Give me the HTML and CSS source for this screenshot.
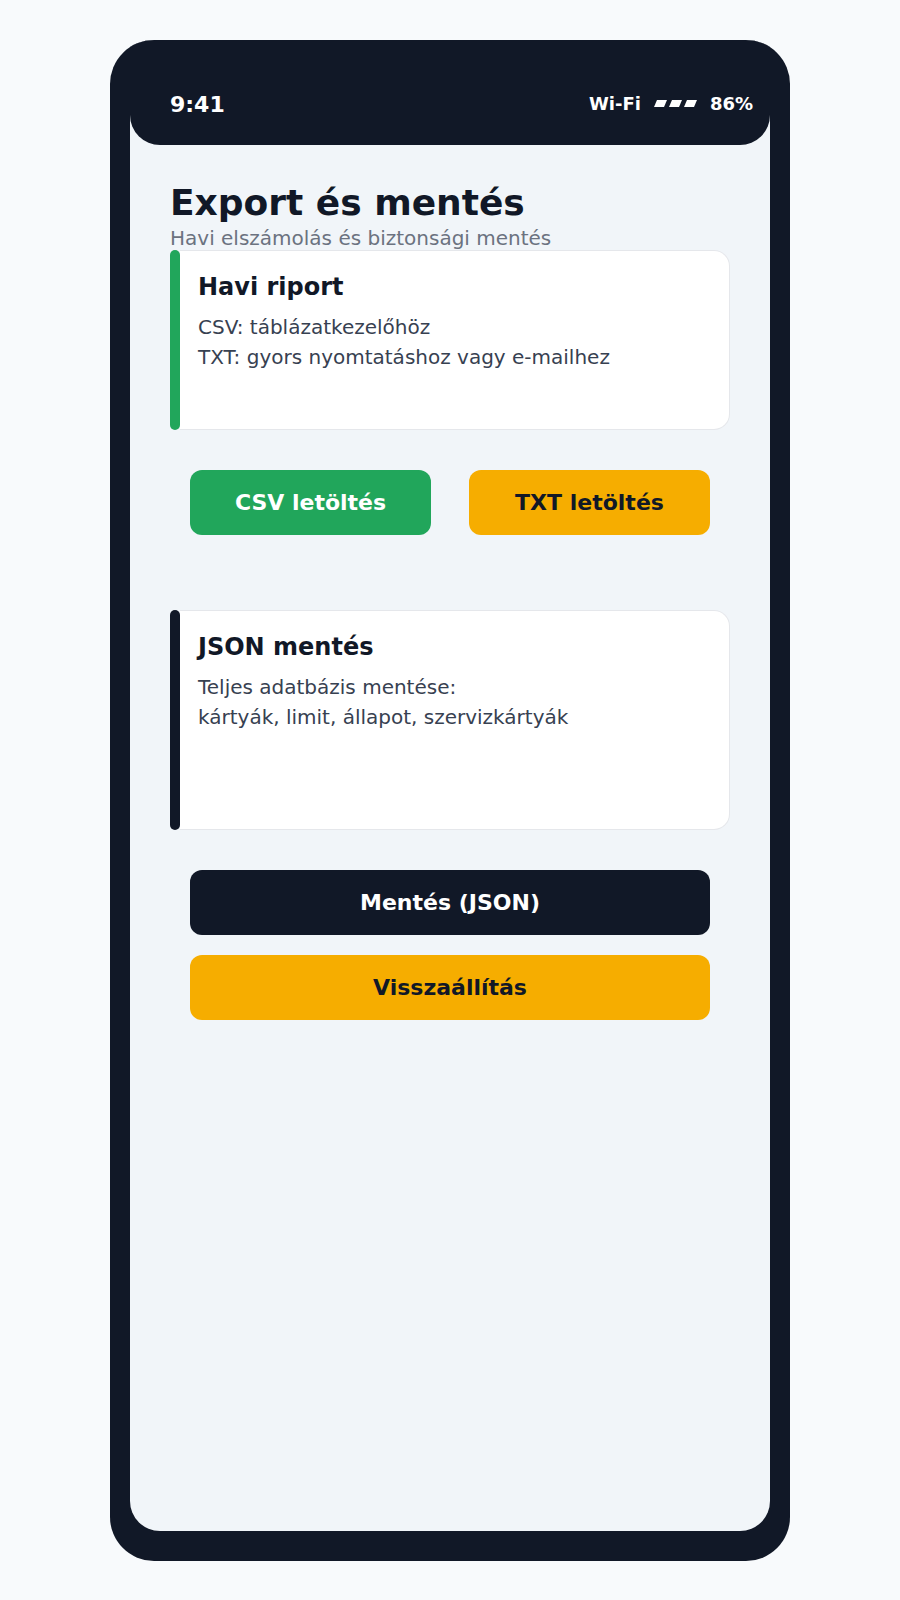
FILE: index.html
```html
<!DOCTYPE html>
<html lang="hu">
<head>
<meta charset="utf-8">
<title>Export és mentés</title>
<link rel="stylesheet" href="styles.css">
</head>
<body>
<div class="phone">
  <div class="screen">
    <header class="status">
      <span class="time">9:41</span>
      <span class="indicators">
        <span>Wi-Fi</span>
        <svg class="signal" width="43" height="8" viewBox="0 0 43 8" aria-hidden="true">
          <polygon points="3,0 13,0 10,7 0,7"/>
          <polygon points="18,0 28,0 25,7 15,7"/>
          <polygon points="33,0 43,0 40,7 30,7"/>
        </svg>
        <span>86%</span>
      </span>
    </header>

    <main class="content">
      <h1 class="title">Export és mentés</h1>
      <p class="subtitle">Havi elszámolás és biztonsági mentés</p>

      <section class="card">
        <div class="accent accent-green"></div>
        <div class="card-body">
          <h2 class="card-title">Havi riport</h2>
          <p class="card-text">CSV: táblázatkezelőhöz</p>
          <p class="card-text">TXT: gyors nyomtatáshoz vagy e-mailhez</p>
        </div>
      </section>

      <div class="btn-row">
        <button class="btn btn-green">CSV letöltés</button>
        <button class="btn btn-amber">TXT letöltés</button>
      </div>

      <section class="card card-tall">
        <div class="accent accent-dark"></div>
        <div class="card-body">
          <h2 class="card-title">JSON mentés</h2>
          <p class="card-text">Teljes adatbázis mentése:</p>
          <p class="card-text">kártyák, limit, állapot, szervizkártyák</p>
        </div>
      </section>

      <div class="btn-stack">
        <button class="btn btn-dark">Mentés (JSON)</button>
        <button class="btn btn-amber">Visszaállítás</button>
      </div>
    </main>
  </div>
</div>
</body>
</html>
```

FILE: styles.css
```css
* {
  box-sizing: border-box;
  margin: 0;
  padding: 0;
}

body {
  background: #f8fafc;
  font-family: "DejaVu Sans", "Noto Sans", sans-serif;
  color: #111827;
}

/* device frame */
.phone {
  width: 680px;
  height: 1521px;
  margin: 40px auto 0;
  padding: 0 20px 30px;
  background: #111827;
  border-radius: 44px;
  overflow: hidden;
  display: flex;
  flex-direction: column;
}

.screen {
  flex: 1;
  background: #f1f5f9;
  border-radius: 0 0 30px 30px;
  display: flex;
  flex-direction: column;
}

/* status bar */
.status {
  height: 105px;
  flex-shrink: 0;
  background: #111827;
  border-radius: 0 0 30px 30px;
  color: #ffffff;
  font-weight: bold;
  display: flex;
  justify-content: space-between;
  align-items: flex-start;
  padding: 52px 17px 0 40px;
}

.time {
  font-size: 22px;
}

.indicators {
  font-size: 18px;
  display: flex;
  align-items: center;
  gap: 13px;
  margin-top: 1px;
}

.signal {
  fill: #ffffff;
  margin-top: 1px;
}

/* page content */
.content {
  padding: 37px 40px 0;
}

.title {
  font-size: 36px;
  font-weight: bold;
  line-height: normal;
  color: #111827;
}

.subtitle {
  font-size: 20px;
  line-height: normal;
  color: #6b7280;
  margin-top: 3px;
}

/* cards */
.card {
  display: flex;
  height: 180px;
  margin-top: 0;
}

.card-tall {
  height: 220px;
  margin-top: 75px;
}

.accent {
  width: 10px;
  flex-shrink: 0;
  border-radius: 5px;
}

.accent-green {
  background: #21a65b;
}

.accent-dark {
  background: #111827;
}

.card-body {
  flex: 1;
  background: #ffffff;
  border: 1px solid #e5e7eb;
  border-left: none;
  border-radius: 0 16px 16px 0;
  padding: 22px 20px 0 18px;
}

.card-title {
  font-size: 24px;
  font-weight: bold;
  line-height: normal;
  color: #111827;
  margin-bottom: 11px;
}

.card-text {
  font-size: 20px;
  line-height: 30px;
  color: #374151;
}

/* buttons */
.btn {
  height: 65px;
  border: none;
  border-radius: 12px;
  font-family: "DejaVu Sans", "Noto Sans", sans-serif;
  font-size: 22px;
  font-weight: bold;
  cursor: pointer;
}

.btn-green {
  background: #21a65b;
  color: #ffffff;
}

.btn-amber {
  background: #f6ad00;
  color: #111827;
}

.btn-dark {
  background: #111827;
  color: #ffffff;
}

.btn-row {
  display: grid;
  grid-template-columns: 1fr 1fr;
  gap: 38px;
  margin: 40px 20px 0;
}

.btn-stack {
  display: flex;
  flex-direction: column;
  gap: 20px;
  margin: 40px 20px 0;
}
```
